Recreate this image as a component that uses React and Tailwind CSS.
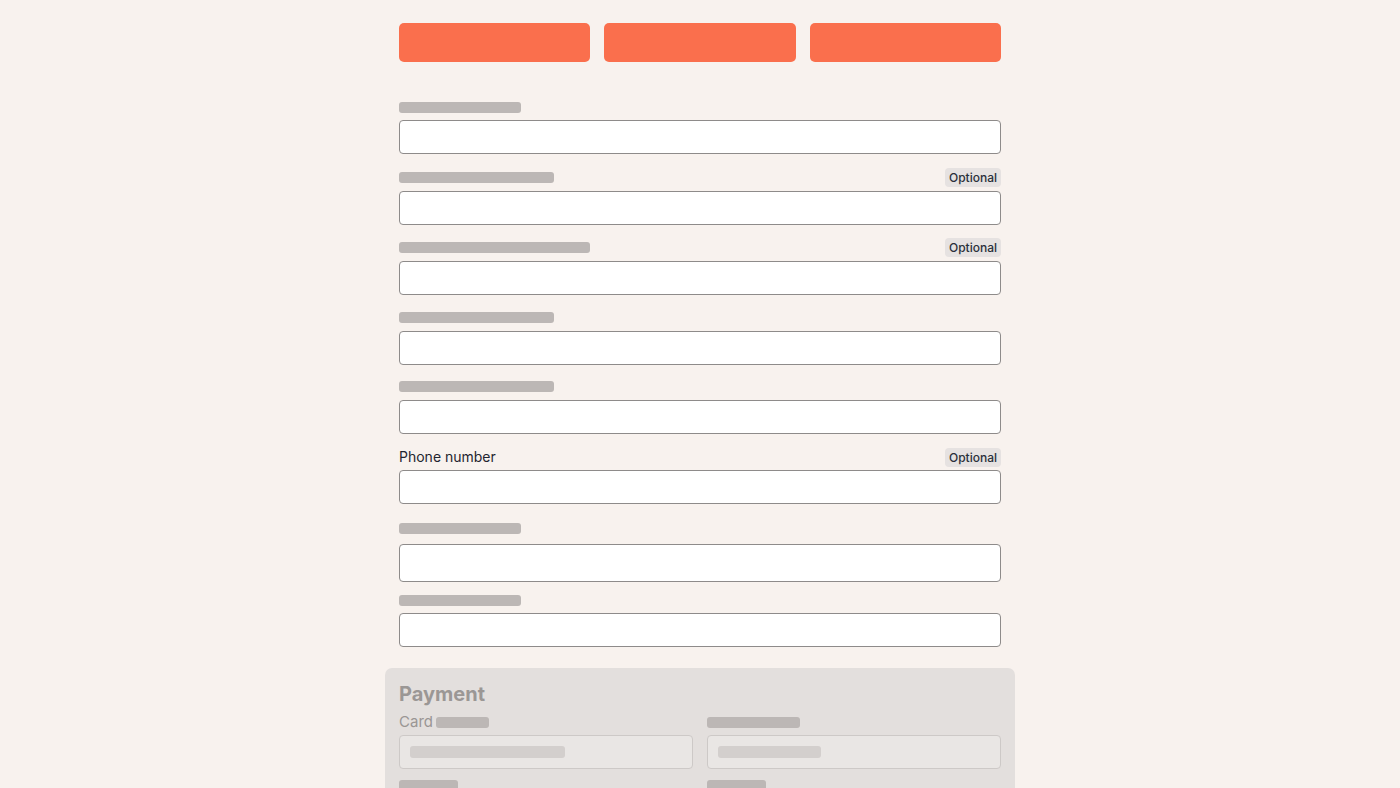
import React from "react";

const Bar = ({ w, className = "" }) => (
  <div className={`h-[11px] rounded-[3px] bg-[#bcb7b5] ${className}`} style={{ width: w }} />
);

const Optional = () => (
  <span className="inline-block rounded-[4px] bg-[#e6e2e1] px-1 py-[2px] text-[12px] font-medium leading-[15px] text-[#2a303b]">
    Optional
  </span>
);

function Field({ label, bar, optional, inputH = "h-[34px]", rowMt = "mt-3", inputMt = "mt-1" }) {
  return (
    <div className={rowMt}>
      <div className="flex h-5 items-center justify-between">
        {label ? (
          <span className="text-[14px] leading-5 text-[#1f2530]">{label}</span>
        ) : (
          <Bar w={bar} />
        )}
        {optional && <Optional />}
      </div>
      <div className={`${inputMt} ${inputH} w-full rounded-[4px] border border-[#8e8b8a] bg-white`} />
    </div>
  );
}

export default function App() {
  return (
    <div
      className="h-[788px] w-full overflow-hidden bg-[#f8f2ee]"
      style={{ fontFamily: "Inter, 'Liberation Sans', sans-serif" }}
    >
      <div className="mx-auto w-[602px] pt-[23px]">
        <div className="grid grid-cols-3 gap-[14px]">
          <div className="h-[39px] rounded-[5px] bg-[#fa6f4d]" />
          <div className="h-[39px] rounded-[5px] bg-[#fa6f4d]" />
          <div className="h-[39px] rounded-[5px] bg-[#fa6f4d]" />
        </div>

        <Field bar={122} rowMt="mt-[35px]" inputMt="mt-[3px]" />
        <Field bar={155} optional rowMt="mt-[13px]" />
        <Field bar={191} optional />
        <Field bar={155} />
        <Field bar={155} rowMt="mt-[11px]" />
        <Field label="Phone number" optional rowMt="mt-[13px]" inputMt="mt-[3px]" />
        <Field bar={122} rowMt="mt-[14px]" inputMt="mt-[6px]" inputH="h-[38px]" />
        <Field bar={122} rowMt="mt-[8px]" inputMt="mt-[3px]" />
      </div>

      <div className="mx-auto mt-[21px] w-[630px] rounded-[7px] bg-[#e3dfdd] px-[14px] pt-[12px] pb-6">
        <div className="text-[20px] font-bold leading-7 text-[#9b9795]">Payment</div>
        <div className="mt-[4px] grid grid-cols-2 gap-x-[14px]">
          <div>
            <div className="flex h-5 items-center gap-[3px]">
              <span className="text-[15px] leading-5 text-[#9a9694]">Card</span>
              <Bar w={53} className="bg-[#bab6b4]" />
            </div>
            <div className="mt-[3px] flex h-[34px] items-center rounded-[4px] border border-[#cdc9c7] bg-[#e9e6e4] px-[10px]">
              <div className="h-3 w-[155px] rounded-[3px] bg-[#d3cfcd]" />
            </div>
            <Bar w={59} className="mt-[11px] bg-[#bab6b4]" />
          </div>
          <div>
            <div className="flex h-5 items-center">
              <Bar w={93} className="bg-[#bab6b4]" />
            </div>
            <div className="mt-[3px] flex h-[34px] items-center rounded-[4px] border border-[#cdc9c7] bg-[#e9e6e4] px-[10px]">
              <div className="h-3 w-[103px] rounded-[3px] bg-[#d3cfcd]" />
            </div>
            <Bar w={59} className="mt-[11px] bg-[#bab6b4]" />
          </div>
        </div>
      </div>
    </div>
  );
}
